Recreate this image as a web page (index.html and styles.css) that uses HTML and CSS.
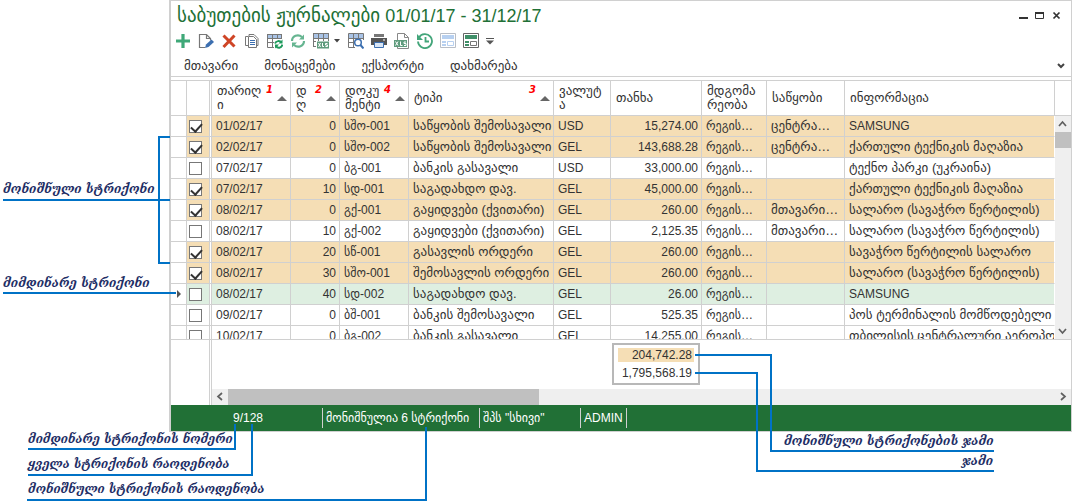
FILE: index.html
```html
<!DOCTYPE html>
<html lang="ka">
<head>
<meta charset="utf-8">
<title>საბუთების ჟურნალები</title>
<link rel="stylesheet" href="styles.css">
</head>
<body>
<main class="figure">
  <section class="window">
    <header class="titlebar">
      <h1 class="title">საბუთების ჟურნალები <span class="period">01/01/17 - 31/12/17</span></h1>
      <div class="controls">
        <button class="plain" aria-label="Minimize"><svg width="10" height="10"><path d="M1 7h9" stroke="#333" stroke-width="2"/></svg></button>
        <button class="plain" aria-label="Maximize"><svg width="10" height="10"><path d="M.5 1.500h8v6h-8z" fill="none" stroke="#333"/><path d="M0 2h9" stroke="#333" stroke-width="2"/></svg></button>
        <button class="plain" aria-label="Close"><svg width="10" height="10"><path d="M1.500 1.500l6 6M7.500 1.500l-6 6" stroke="#333" stroke-width="1.700"/></svg></button>
      </div>
    </header>
    <div class="toolbar">
      <button class="plain" aria-label="Add"><svg class="icon" viewBox="0 0 16 16"><path d="M8 1v14M1 8h14" stroke="#3fa878" stroke-width="3.200"/></svg></button>
      <button class="plain" aria-label="Edit"><svg class="icon" viewBox="0 0 16 16"><path d="M7 14.500H1.500v-13h7l4 4v2M8.500 1.500v4h4" fill="none" stroke="#777" stroke-width="1.200"/><path d="M7 15l1-3.500 5.500-5 2.500 2.500-5.500 5z" fill="#3c6fb0"/></svg></button>
      <button class="plain" aria-label="Delete"><svg class="icon" viewBox="0 0 16 16"><path d="M2.500 2.500l11 11M13.500 2.500L2.500 14" stroke="#cf4526" stroke-width="3"/></svg></button>
      <button class="plain" aria-label="Copy"><svg class="icon" viewBox="0 0 16 16"><path d="M4 12.500H1.500v-9H4M5 3V1.500h5l4 4v7h-1.500" fill="none" stroke="#777"/><path d="M4.500 3.500h5l3 3v8h-8z" fill="#fff" stroke="#777"/><path d="M6 7.500h5M6 9.500h5M6 11.500h5" stroke="#3c6fb0"/></svg></button>
      <button class="plain" aria-label="Refresh table"><svg class="icon" viewBox="0 0 16 16"><path d="M0 1h15v4H0z" fill="#a9c3e6"/><path d="M.5 1v13.500H7M5.500 1v13M10.500 1v5M14.500 1v5M0 5.500h15M0 9.500h7M0 1.500h15" fill="none" stroke="#777"/><path d="M8 10.500c1-3 5-3 6.500-1M15.500 11.500c-1 4-5 4-6.500 1.500" fill="none" stroke="#1e9a5c" stroke-width="2"/><path d="M15.500 6.500v4h-4zM8 15.500v-4h4z" fill="#1e9a5c"/></svg></button>
      <button class="plain" aria-label="Refresh"><svg class="icon" viewBox="0 0 16 16"><path d="M2 8c0-5 6-7.500 10-4M14 8c0 5-6 7.500-10 4" fill="none" stroke="#66b591" stroke-width="2.200"/><path d="M14 1.500v5H9zM2 14.500v-5h5z" fill="#66b591"/></svg></button>
      <div class="split">
        <button class="plain" aria-label="Export table"><svg class="icon" viewBox="0 0 16 16"><path d="M0 1h16v4H0z" fill="#a9c3e6"/><path d="M0 .5h16M.5 0v14M5.500 0v8M10.500 0v8M15.500 0v8M0 5.500h16M0 8.500h3M0 13.500h3" stroke="#777"/><path d="M4 8.500h12v7H4z" fill="#5f9b7d"/><path d="M5.500 10l2 4M7.500 10l-2 4M9.500 10v3.500h1.500M14.500 10.500h-2v1.500h2v1.500h-2" fill="none" stroke="#fff"/></svg></button>
        <button class="plain" aria-label="Export options"><svg width="6" height="4"><path d="M0 0h6L3 3.500z" fill="#444"/></svg></button>
      </div>
      <button class="plain" aria-label="Preview"><svg class="icon" viewBox="0 0 16 16"><path d="M0 1h16v4H0z" fill="#a9c3e6"/><path d="M7 14.500H.5V.5h15V7M5.500 1v13M10.500 1v5M0 5.500h15M0 9.500h6" fill="none" stroke="#777"/><circle cx="10" cy="9.500" r="3.300" fill="#fff" stroke="#3c6fb0" stroke-width="1.500"/><path d="M12.500 12l3 3.500" stroke="#3c6fb0" stroke-width="2"/></svg></button>
      <button class="plain" aria-label="Print"><svg class="icon" viewBox="0 0 16 16"><path d="M3 1h10v3H3z" fill="#777"/><path d="M0 5h16v7H0z" fill="#555"/><path d="M3.500 9.500h9v5h-9z" fill="#d9e6f6" stroke="#3c6fb0"/><path d="M12 7h2" stroke="#fff"/></svg></button>
      <button class="plain" aria-label="Excel"><svg class="icon" viewBox="0 0 16 16"><path d="M3.500 7V.5h7l4 4v11h-11V14M10.500.5v4h4" fill="none" stroke="#888"/><path d="M0 7h13v7H0z" fill="#5f9b7d"/><path d="M1.500 8.500l2.500 4M4 8.500l-2.500 4M6.500 8.500v4h2M12 9h-2v1.500h2v2h-2" fill="none" stroke="#fff"/></svg></button>
      <button class="plain" aria-label="History"><svg class="icon" viewBox="0 0 16 16"><path d="M2 4.500a7 7 0 1 1-1 4M8.500 4v4.500H12" fill="none" stroke="#43a57a" stroke-width="1.800"/><path d="M0 1v6h6z" fill="#43a57a"/></svg></button>
      <button class="plain" aria-label="Light layout"><svg class="icon" viewBox="0 0 16 16"><path d="M.5.5h15v14H.5z" fill="#fff" stroke="#b9bec6"/><path d="M2 2h12v4H2zM2 8h4v2H2zM2 11h4v2H2z" fill="#b7d0f0"/><path d="M7.500 8.500h6v4h-6z" fill="none" stroke="#b7d0f0"/></svg></button>
      <button class="plain" aria-label="Dark layout"><svg class="icon" viewBox="0 0 16 16"><path d="M.5.5h15v14H.5z" fill="#fff" stroke="#666"/><path d="M2 2h12v4H2zM2 8h4v2H2zM2 11h4v2H2z" fill="#3f8f68"/><path d="M7.500 8.500h6v4h-6z" fill="none" stroke="#777"/></svg></button>
      <button class="plain" aria-label="More"><svg width="8" height="7"><path d="M0 .5h8" stroke="#555"/><path d="M0 2.500h8L4 6.500z" fill="#555"/></svg></button>
    </div>
    <nav class="menu">
      <button class="plain menu-item">მთავარი</button>
      <button class="plain menu-item">მონაცემები</button>
      <button class="plain menu-item">ექსპორტი</button>
      <button class="plain menu-item">დახმარება</button>
      <button class="plain menu-toggle" aria-label="Collapse"><svg width="8" height="6"><path d="M1 1l3 3 3-3" fill="none" stroke="#444" stroke-width="2"/></svg></button>
    </nav>
    <div class="grid">
      <div class="table-wrap">
        <table class="journal">
          <colgroup><col class="c-mark"><col class="c-check"><col class="c-gap"><col class="c-date"><col class="c-num"><col class="c-doc"><col class="c-type"><col class="c-cur"><col class="c-sum"><col class="c-state"><col class="c-store"><col></colgroup>
          <thead>
            <tr>
              <th></th><th></th><th></th>
              <th><div class="head"><span>თარიღ<br>ი</span><b class="order">1</b><i class="sort"></i></div></th>
              <th><div class="head"><span>დ<br>ღ</span><b class="order">2</b><i class="sort"></i></div></th>
              <th><div class="head"><span>დოკუ<br>მენტი</span><b class="order">4</b><i class="sort"></i></div></th>
              <th><div class="head"><span>ტიპი</span><b class="order">3</b><i class="sort"></i></div></th>
              <th><div class="head"><span>ვალუტ<br>ა</span></div></th>
              <th><div class="head"><span>თანხა</span></div></th>
              <th><div class="head"><span>მდგომა<br>რეობა</span></div></th>
              <th><div class="head"><span>საწყობი</span></div></th>
              <th><div class="head"><span>ინფორმაცია</span></div></th>
            </tr>
          </thead>
          <tbody>
            <tr class="marked"><td></td><td><input type="checkbox" aria-label="01/02/17" checked></td><td></td><td>01/02/17</td><td>0</td><td>სშო-001</td><td>საწყობის შემოსავალი</td><td>USD</td><td>15,274.00</td><td>რეგის…</td><td>ცენტრა…</td><td><span class="latin">SAMSUNG</span></td></tr>
            <tr class="marked"><td></td><td><input type="checkbox" aria-label="02/02/17" checked></td><td></td><td>02/02/17</td><td>0</td><td>სშო-002</td><td>საწყობის შემოსავალი</td><td>GEL</td><td>143,688.28</td><td>რეგის…</td><td>ცენტრა…</td><td>ქართული ტექნიკის მაღაზია</td></tr>
            <tr><td></td><td><input type="checkbox" aria-label="07/02/17"></td><td></td><td>07/02/17</td><td>0</td><td>ბგ-001</td><td>ბანკის გასავალი</td><td>USD</td><td>33,000.00</td><td>რეგის…</td><td></td><td>ტექნო პარკი (უკრაინა)</td></tr>
            <tr class="marked"><td></td><td><input type="checkbox" aria-label="07/02/17" checked></td><td></td><td>07/02/17</td><td>10</td><td>სდ-001</td><td>საგადახდო დავ.</td><td>GEL</td><td>45,000.00</td><td>რეგის…</td><td></td><td>ქართული ტექნიკის მაღაზია</td></tr>
            <tr class="marked"><td></td><td><input type="checkbox" aria-label="08/02/17" checked></td><td></td><td>08/02/17</td><td>0</td><td>გქ-001</td><td>გაყიდვები (ქვითარი)</td><td>GEL</td><td>260.00</td><td>რეგის…</td><td>მთავარი…</td><td>სალარო (სავაჭრო წერტილის)</td></tr>
            <tr><td></td><td><input type="checkbox" aria-label="08/02/17"></td><td></td><td>08/02/17</td><td>10</td><td>გქ-002</td><td>გაყიდვები (ქვითარი)</td><td>GEL</td><td>2,125.35</td><td>რეგის…</td><td>მთავარი…</td><td>სალარო (სავაჭრო წერტილის)</td></tr>
            <tr class="marked"><td></td><td><input type="checkbox" aria-label="08/02/17" checked></td><td></td><td>08/02/17</td><td>20</td><td>სწ-001</td><td>გასავლის ორდერი</td><td>GEL</td><td>260.00</td><td>რეგის…</td><td></td><td>სავაჭრო წერტილის სალარო</td></tr>
            <tr class="marked"><td></td><td><input type="checkbox" aria-label="08/02/17" checked></td><td></td><td>08/02/17</td><td>30</td><td>სშო-001</td><td>შემოსავლის ორდერი</td><td>GEL</td><td>260.00</td><td>რეგის…</td><td></td><td>სალარო (სავაჭრო წერტილის)</td></tr>
            <tr class="current"><td><i class="pointer"></i></td><td><input type="checkbox" aria-label="08/02/17"></td><td></td><td>08/02/17</td><td>40</td><td>სდ-002</td><td>საგადახდო დავ.</td><td>GEL</td><td>26.00</td><td>რეგის…</td><td></td><td><span class="latin">SAMSUNG</span></td></tr>
            <tr><td></td><td><input type="checkbox" aria-label="09/02/17"></td><td></td><td>09/02/17</td><td>0</td><td>ბშ-001</td><td>ბანკის შემოსავალი</td><td>GEL</td><td>525.35</td><td>რეგის…</td><td></td><td>პოს ტერმინალის მომწოდებელი ბანკი</td></tr>
            <tr><td></td><td><input type="checkbox" aria-label="10/02/17"></td><td></td><td>10/02/17</td><td>0</td><td>ბგ-002</td><td>ბანკის გასავალი</td><td>GEL</td><td>14,255.00</td><td>რეგის…</td><td></td><td>თბილისის ცენტრალური აეროპორტი</td></tr>
          </tbody>
        </table>
      </div>
      <div class="side">
        <div class="side-head"></div>
        <div class="vscroll">
          <svg width="16" height="16"><path d="M4 10l3.500-4L11 10" fill="none" stroke="#606060" stroke-width="1.700"/></svg>
          <div class="vthumb"></div>
          <svg class="vdown" width="16" height="16"><path d="M4 6l3.500 4L11 6" fill="none" stroke="#606060" stroke-width="1.700"/></svg>
        </div>
      </div>
    </div>
    <div class="summary">
      <div class="summary-edge"></div>
      <div class="summary-main">
        <div class="totals"><span class="total total-marked">204,742.28</span><span class="total">1,795,568.19</span></div>
        <div class="hscroll">
          <svg width="16" height="16"><path d="M10 4L6 7.500l4 3.500" fill="none" stroke="#606060" stroke-width="1.700"/></svg>
          <div class="hthumb"></div>
          <svg class="hright" width="16" height="16"><path d="M6 4l4 3.500L6 11" fill="none" stroke="#606060" stroke-width="1.700"/></svg>
        </div>
      </div>
    </div>
    <footer class="status">
      <span class="cell cell-pos">9/128</span>
      <span class="cell cell-count">მონიშნულია 6 სტრიქონი</span>
      <span class="cell cell-firm">შპს "სხივი"</span>
      <span class="cell cell-user">ADMIN</span>
    </footer>
  </section>

  <svg class="callouts" width="1072" height="503" aria-hidden="true">
    <path d="M170 137H159V263H170M3 200H170M3 293H176M28 449H235V424M28 475H252V424M27 500H426V427M695 355H771V451H994M695 373H757V471H994"/>
  </svg>
  <p class="note n-marked">მონიშნული სტრიქონი</p>
  <p class="note n-current">მიმდინარე სტრიქონი</p>
  <p class="note note-status n-number">მიმდინარე სტრიქონის ნომერი</p>
  <p class="note note-status n-all">ყველა სტრიქონის რაოდენობა</p>
  <p class="note note-status n-count">მონიშნული სტრიქონის რაოდენობა</p>
  <p class="note n-sum-marked">მონიშნული სტრიქონების ჯამი</p>
  <p class="note n-sum">ჯამი</p>
</main>
</body>
</html>
```
FILE: styles.css
```css
* { box-sizing: border-box; }
body { margin: 0; background: #fff; color: #333; font: 12px/14px "Liberation Sans", "DejaVu Sans", sans-serif; }
.figure { position: relative; min-height: 503px; overflow: hidden; }
.window { margin-left: 169px; border: 1px solid #d0d0d0; border-left-width: 2px; background: #fff; }
.plain { display: flex; align-items: center; justify-content: center; padding: 0; border: 0; background: none; color: inherit; font: inherit; }
svg { display: block; }

.titlebar { display: flex; justify-content: space-between; align-items: center; height: 29px; padding: 0 9px 0 6px; }
.title { margin: 0; font-size: 19px; line-height: 24px; font-weight: 400; color: #217036; white-space: nowrap; }
.period { font-size: 18px; }
.controls { display: flex; gap: 7px; }
.toolbar { display: flex; align-items: center; gap: 7px; height: 22px; padding-left: 4px; }
.icon { width: 16px; height: 16px; }
.split { display: flex; align-items: center; gap: 5px; margin-right: 1px; }
.menu { display: flex; align-items: center; gap: 26px; height: 25px; padding: 4px 6px 0 13px; border-bottom: 1px solid #d0d0d0; font-size: 13px; }
.menu-toggle { margin-left: auto; }

.grid { display: flex; height: 260px; margin-top: 3px; border-top: 1px solid #d0d0d0; border-bottom: 1px solid #d0d0d0; overflow: hidden; }
.table-wrap { flex: 1; min-width: 0; overflow: hidden; }
.journal { width: 100%; table-layout: fixed; border-spacing: 0; }
.c-mark { width: 16px; }
.c-check { width: 23px; }
.c-gap { width: 2px; }
.c-date { width: 79px; }
.c-num { width: 49px; }
.c-doc { width: 69px; }
.c-type { width: 145px; }
.c-cur { width: 57px; }
.c-sum { width: 91px; }
.c-state { width: 65px; }
.c-store { width: 78px; }
th, td { padding: 0 3px 0 4px; border-right: 1px solid #d0d0d0; border-bottom: 1px solid #d0d0d0; overflow: hidden; white-space: nowrap; text-align: left; font-weight: 400; }
th { height: 35px; font-size: 13px; }
td { height: 21px; }
td:nth-child(5), td:nth-child(9) { text-align: right; }
td:nth-child(7), td:nth-child(n+11) { font-size: 13px; }
.latin { font-size: 12px; }
th:nth-child(-n+3), td:nth-child(-n+3) { padding: 0; }
td:last-child { border-right-color: #fff; }
.head { display: flex; align-items: center; height: 34px; padding-left: 1px; }
.order { align-self: flex-start; margin: 3px 4px 0 auto; color: #f00; font: italic bold 10px/12px "DejaVu Sans", sans-serif; }
.sort { border: 5px solid transparent; border-top: 0; border-bottom-color: #666; }
.marked td:nth-child(n+2) { background: #f5deb5; }
.current td:nth-child(n+2) { background: #deefe1; }
.marked td:nth-child(3), .current td:nth-child(3) { background: #fff; }
.pointer { display: block; width: 0; margin-left: 6px; border: 4px solid transparent; border-left-color: #555; border-right: 0; }
input[type="checkbox"] { display: block; appearance: none; width: 13px; height: 13px; margin: 0 0 0 2px; border: 1px solid #777; background: #fff; }
input[type="checkbox"]:checked::after { content: ""; display: block; width: 9px; height: 5px; margin: 2px 1px; border: solid #333; border-width: 0 0 2px 2px; transform: rotate(-48deg); }

.side { display: flex; flex-direction: column; width: 16px; }
.side-head { height: 35px; border-bottom: 1px solid #d0d0d0; }
.vscroll { flex: 1; display: flex; flex-direction: column; background: #efefef; }
.vthumb { height: 16px; background: #c0c0c0; }
.vdown { margin-top: auto; }

.summary { display: flex; }
.summary-edge { width: 41px; border-right: 1px solid #d0d0d0; box-shadow: inset -1px 0 #fff, inset -2px 0 #d0d0d0; }
.summary-main { flex: 1; }
.totals { width: 88px; margin: 3px 0 4px 400px; padding: 3px 4px; border: 2px solid #b8b8b8; text-align: right; }
.total { display: block; padding-right: 2px; }
.total-marked { margin-bottom: 4px; background: #f5deb5; }
.hscroll { display: flex; height: 16px; background: #efefef; }
.hthumb { width: 311px; background: #c0c0c0; }
.hright { margin-left: auto; }

.status { display: flex; align-items: center; height: 26px; background: #217036; color: #fff; }
.cell { height: 20px; padding-left: 3px; border-right: 1px solid #d0d0d0; line-height: 20px; white-space: nowrap; }
.cell-pos { width: 152px; text-align: center; }
.cell-count { width: 157px; }
.cell-firm { width: 101px; }
.cell-user { width: 46px; }

.callouts { position: absolute; left: 0; top: 0; }
.callouts path { fill: none; stroke: #0072c6; stroke-width: 2; }
.note { position: absolute; margin: 0; color: #1f2f66; font: italic bold 12px/16px "DejaVu Serif", serif; white-space: nowrap; }
.note-status { font-family: "DejaVu Serif Condensed", "DejaVu Serif", serif; font-size: 13px; }
.n-marked { left: 3px; top: 181px; }
.n-current { left: 3px; top: 275px; }
.n-number { left: 28px; top: 431px; }
.n-all { left: 28px; top: 456px; }
.n-count { left: 28px; top: 481px; }
.n-sum-marked { left: 784px; top: 433px; }
.n-sum { left: 962px; top: 453px; }
```
